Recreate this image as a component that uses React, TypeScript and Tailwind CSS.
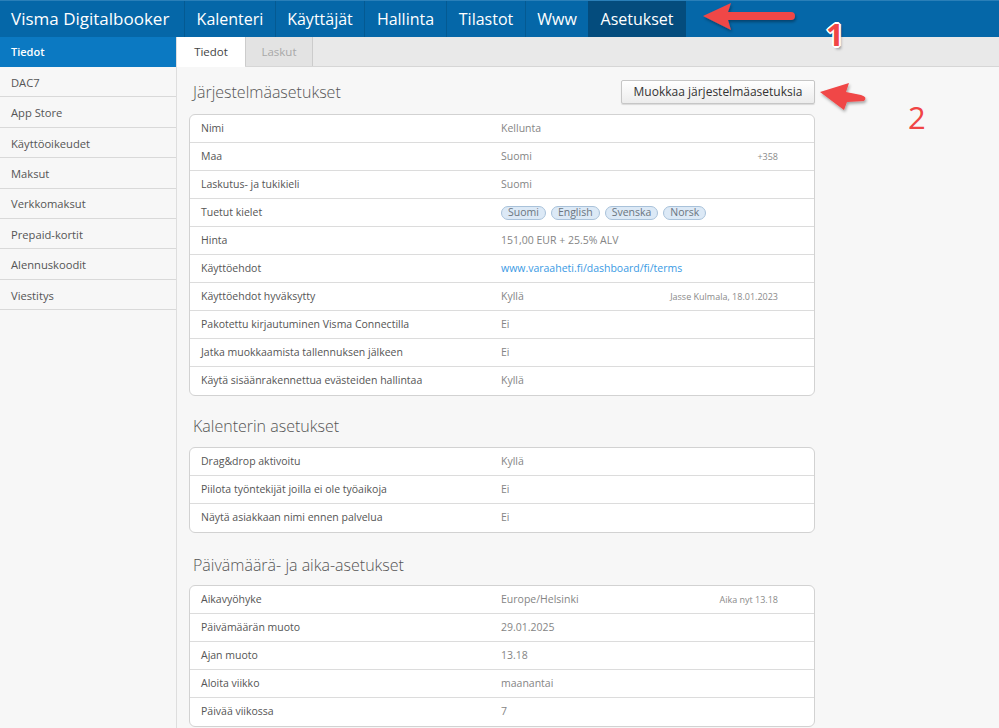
import React from "react";

const navItems = [
  { label: "Kalenteri", w: "w-[91px]" },
  { label: "Käyttäjät", w: "w-[89px]" },
  { label: "Hallinta", w: "w-[82px]" },
  { label: "Tilastot", w: "w-[79px]" },
  { label: "Www", w: "w-[63px]" },
];

const sideItems = [
  "DAC7",
  "App Store",
  "Käyttöoikeudet",
  "Maksut",
  "Verkkomaksut",
  "Prepaid-kortit",
  "Alennuskoodit",
  "Viestitys",
];

type Row = { label: string; value: React.ReactNode; aside?: string };

const sys: Row[] = [
  { label: "Nimi", value: "Kellunta" },
  { label: "Maa", value: "Suomi", aside: "+358" },
  { label: "Laskutus- ja tukikieli", value: "Suomi" },
  {
    label: "Tuetut kielet",
    value: (
      <div className="flex gap-[5px]">
        {["Suomi", "English", "Svenska", "Norsk"].map((t) => (
          <span
            key={t}
            className="h-[14px] px-[6px] flex items-center rounded-full border border-[#a9c2da] bg-[#dce9f6] text-[10.5px] text-[#6b7580]"
          >
            {t}
          </span>
        ))}
      </div>
    ),
  },
  { label: "Hinta", value: "151,00 EUR + 25.5% ALV" },
  {
    label: "Käyttöehdot",
    value: <span className="text-[#3a9ae4]">www.varaaheti.fi/dashboard/fi/terms</span>,
  },
  { label: "Käyttöehdot hyväksytty", value: "Kyllä", aside: "Jasse Kulmala, 18.01.2023" },
  { label: "Pakotettu kirjautuminen Visma Connectilla", value: "Ei" },
  { label: "Jatka muokkaamista tallennuksen jälkeen", value: "Ei" },
  { label: "Käytä sisäänrakennettua evästeiden hallintaa", value: "Kyllä" },
];

const cal: Row[] = [
  { label: "Drag&drop aktivoitu", value: "Kyllä" },
  { label: "Piilota työntekijät joilla ei ole työaikoja", value: "Ei" },
  { label: "Näytä asiakkaan nimi ennen palvelua", value: "Ei" },
];

const dt: Row[] = [
  { label: "Aikavyöhyke", value: "Europe/Helsinki", aside: "Aika nyt 13.18" },
  { label: "Päivämäärän muoto", value: "29.01.2025" },
  { label: "Ajan muoto", value: "13.18" },
  { label: "Aloita viikko", value: "maanantai" },
  { label: "Päivää viikossa", value: "7" },
];

function Card({ rows }: { rows: Row[] }) {
  return (
    <div className="w-[626px] rounded-[6px] border border-[#d2d2d2] bg-white overflow-hidden">
      {rows.map((r, i) => (
        <div
          key={r.label}
          className={
            "h-[28px] flex items-center text-[10.5px] " +
            (i < rows.length - 1 ? "border-b border-[#dcdcdc]" : "")
          }
        >
          <div className="w-[311px] pl-[11px] text-[#555555]">{r.label}</div>
          <div className="flex-1 text-[#858585]">{r.value}</div>
          {r.aside && (
            <div className="pr-[36px] text-[9px] text-[#8a8a8a]">{r.aside}</div>
          )}
        </div>
      ))}
    </div>
  );
}

function Heading({ children }: { children: React.ReactNode }) {
  return <h2 className="pl-[4px] text-[16px] font-light text-[#555555]">{children}</h2>;
}

export default function App() {
  return (
    <div
      className="relative w-[999px] h-[728px] overflow-hidden bg-[#f7f7f7]"
      style={{ fontFamily: "'Open Sans', 'Liberation Sans', sans-serif" }}
    >
      {/* Top bar */}
      <div className="h-[37px] flex bg-[#0567a8] border-t border-[#2a7fb8] text-white">
        <div className="w-[184px] pl-[11px] flex items-center text-[17px]">Visma Digitalbooker</div>
        {navItems.map((n) => (
          <div
            key={n.label}
            className={n.w + " flex items-center justify-center border-l border-[#045a92] text-[16px]"}
          >
            {n.label}
          </div>
        ))}
        <div className="w-[98px] flex items-center justify-center bg-[#044c7d] text-[16px]">
          Asetukset
        </div>
      </div>

      <div className="flex">
        {/* Sidebar */}
        <div className="w-[176px] shrink-0 bg-[#f7f7f7]">
          <div className="h-[30px] pl-[11px] pt-[1px] flex items-center bg-[#0b79c2] text-white text-[11px] font-semibold">
            Tiedot
          </div>
          {sideItems.map((s) => (
            <div
              key={s}
              className="h-[30.4px] pl-[11px] pt-[3px] flex items-center border-b border-[#d9d9d9] text-[11.2px] text-[#555555]"
            >
              {s}
            </div>
          ))}
        </div>

        {/* Main */}
        <div className="flex-1 h-[691px] border-l border-[#dedede]">
          <div className="h-[30px] flex bg-[#e9e9e9] border-b border-[#d6d6d6]">
            <div className="w-[68px] h-[30px] flex items-center justify-center bg-white text-[11.5px] text-[#444444]">
              Tiedot
            </div>
            <div className="w-[68px] h-[29px] flex items-center justify-center bg-[#e3e3e3] border-x border-[#cccccc] text-[11.5px] text-[#a8a8a8]">
              Laskut
            </div>
          </div>

          <div className="pl-[12px]">
            <div className="w-[626px] h-[24px] mt-[13px] mb-[10px] flex items-center justify-between">
              <Heading>Järjestelmäasetukset</Heading>
              <button className="h-[24px] w-[194px] rounded-[2px] border border-[#c6c6c6] bg-gradient-to-b from-white to-[#ececec] text-[12px] text-[#333333] shadow-[0_1px_1px_rgba(0,0,0,0.12)]">
                Muokkaa järjestelmäasetuksia
              </button>
            </div>
            <Card rows={sys} />

            <div className="h-[24px] mt-[18px] mb-[9px] flex items-center">
              <Heading>Kalenterin asetukset</Heading>
            </div>
            <Card rows={cal} />

            <div className="h-[24px] mt-[20px] mb-[8px] flex items-center">
              <Heading>Päivämäärä- ja aika-asetukset</Heading>
            </div>
            <Card rows={dt} />
          </div>
        </div>
      </div>

      {/* Annotations */}
      <svg className="absolute left-0 top-0 pointer-events-none" width="999" height="728">
        <defs>
          <filter id="sh" x="-20%" y="-20%" width="140%" height="160%">
            <feDropShadow dx="1" dy="2" stdDeviation="1.5" floodColor="#000" floodOpacity="0.35" />
          </filter>
        </defs>
        <path
          d="M703,16 L731,3 L728,12 L791,12 A4,4 0 0 1 791,20 L728,20 L731,30 Z"
          fill="#f04747"
          filter="url(#sh)"
        />
        <path
          d="M820,92 L849,83 L846,92 L861,95 Q868,97 864,101 L847,102 L844,110 Z"
          fill="#f04747"
          filter="url(#sh)"
        />
      </svg>
      <div className="absolute left-[826px] top-[19px] text-[31px] font-bold leading-none text-[#f04545] [text-shadow:0_0_1px_#fff,1px_1px_0_#fff,-1px_-1px_0_#fff,1px_-1px_0_#fff,-1px_1px_0_#fff,2px_0_0_#fff,-2px_0_0_#fff,0_2px_0_#fff,0_-2px_0_#fff,2px_3px_3px_rgba(0,0,0,0.4)]">
        1
      </div>
      <div className="absolute left-[908px] top-[102px] text-[31px] leading-none text-[#f04545]">2</div>
    </div>
  );
}
